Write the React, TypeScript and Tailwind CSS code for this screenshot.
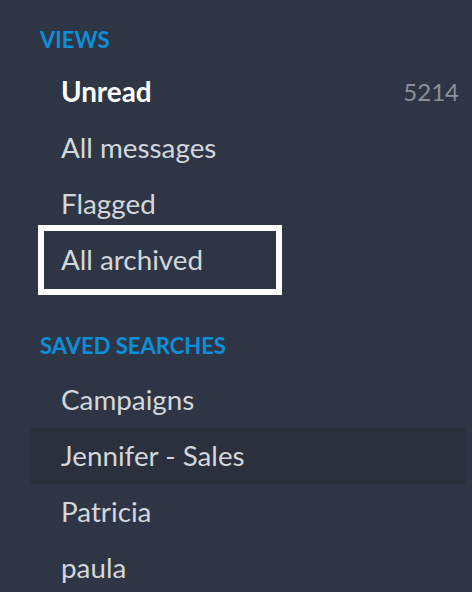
export default function App() {
  const font = { fontFamily: 'Lato, "Noto Sans", sans-serif' };
  const Row = ({ label, bold, count, hover, focus }: { label: string; bold?: boolean; count?: string; hover?: boolean; focus?: boolean }) => (
    <div className={`relative flex h-[56px] items-center justify-between rounded-[4px] pl-[31px] pr-[7px] ${hover ? 'bg-[#2a303c]' : ''}`}>
      <span className={`text-[27.8px] leading-[56px] ${bold ? 'font-bold text-white' : 'text-[#d3d6db]'}`}>{label}</span>
      {count && <span className="text-[24px] leading-[56px] text-[#8c9098]">{count}</span>}
      {focus && <div className="absolute left-[8px] top-[-7px] h-[70px] w-[244px] border-[6px] border-white" />}
    </div>
  );
  return (
    <div className="h-[592px] w-[472px] overflow-hidden bg-[#2e3646] pt-[22px]" style={font}>
      <div className="h-[36px] pl-[40px] text-[22px] font-bold leading-[36px] text-[#0b8fd9]">VIEWS</div>
      <div className="mt-[6px] w-[436px] ml-[30px]">
        <Row label="Unread" bold count="5214" />
        <Row label="All messages" />
        <Row label="Flagged" />
        <Row label="All archived" focus />
      </div>
      <div className="mt-[40px] h-[36px] pl-[40px] text-[22px] font-bold leading-[36px] text-[#0b8fd9]">SAVED SEARCHES</div>
      <div className="mt-[8px] w-[436px] ml-[30px]">
        <Row label="Campaigns" />
        <Row label="Jennifer - Sales" hover />
        <Row label="Patricia" />
        <Row label="paula" />
      </div>
    </div>
  );
}
